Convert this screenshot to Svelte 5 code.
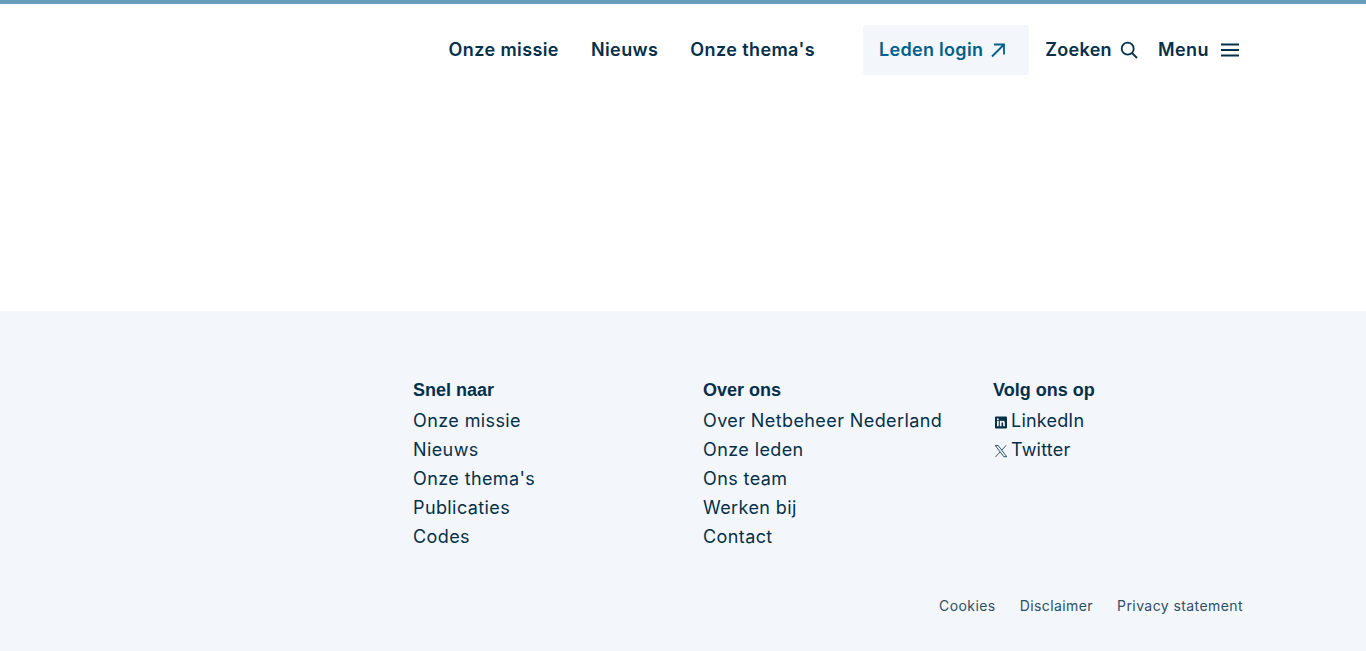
<script lang="ts">
  const mainNav = ['Onze missie', 'Nieuws', "Onze thema's"];

  const quickLinks = ['Onze missie', 'Nieuws', "Onze thema's", 'Publicaties', 'Codes'];
  const aboutLinks = ['Over Netbeheer Nederland', 'Onze leden', 'Ons team', 'Werken bij', 'Contact'];
  const legalLinks = ['Cookies', 'Disclaimer', 'Privacy statement'];
</script>

<header class="header">
  <nav class="main-nav" aria-label="Hoofdmenu">
    {#each mainNav as item}
      <a href="#top" class="nav-link">{item}</a>
    {/each}
  </nav>

  <a href="#top" class="login">
    Leden login
    <svg width="16" height="16" viewBox="0 0 16 16" fill="none" stroke="currentColor" stroke-width="1.8">
      <path d="M2 14.5 14 2.5M4 2.5h10v10" />
    </svg>
  </a>

  <button type="button" class="tool search">
    Zoeken
    <svg width="18" height="18" viewBox="0 0 18 18" fill="none" stroke="currentColor" stroke-width="1.8">
      <circle cx="7.7" cy="7.7" r="6" />
      <path d="m12 12 5 5" />
    </svg>
  </button>

  <button type="button" class="tool menu">
    Menu
    <svg width="18" height="14" viewBox="0 0 18 14" fill="none" stroke="currentColor" stroke-width="1.8">
      <path d="M0 1.5h18M0 7h18M0 12.5h18" />
    </svg>
  </button>
</header>

<main class="content"></main>

<footer class="footer">
  <div class="columns">
    <div class="column">
      <h2>Snel naar</h2>
      <ul>
        {#each quickLinks as link}
          <li><a href="#top">{link}</a></li>
        {/each}
      </ul>
    </div>

    <div class="column">
      <h2>Over ons</h2>
      <ul>
        {#each aboutLinks as link}
          <li><a href="#top">{link}</a></li>
        {/each}
      </ul>
    </div>

    <div class="column">
      <h2>Volg ons op</h2>
      <ul>
        <li>
          <a href="#top" class="social">
            <svg width="14" height="14" viewBox="0 0 14 14">
              <path
                fill-rule="evenodd"
                fill="currentColor"
                d="M2 1.5h10a1 1 0 0 1 1 1v10a1 1 0 0 1-1 1H2a1 1 0 0 1-1-1v-10a1 1 0 0 1 1-1ZM3 5.8v5.4h1.7V5.800ZM3 3.400v1.600h1.700V3.400ZM5.800 5.800v5.400h1.700V8.200c0-1.300 1.600-1.300 1.600 0v3h1.700V7.800c0-2.400-2.500-2.500-3.300-1.200v-.8Z"
              />
            </svg>
            LinkedIn
          </a>
        </li>
        <li>
          <a href="#top" class="social">
            <svg width="14" height="14" viewBox="0 0 14 14" fill="none" stroke="currentColor" stroke-width="0.8">
              <path d="M1.300 1.500h2.900l8.500 11.200H9.800ZM12.200 1.300 7.800 6.200M6.100 8 1.500 12.900" />
            </svg>
            Twitter
          </a>
        </li>
      </ul>
    </div>
  </div>

  <nav class="legal" aria-label="Juridisch">
    {#each legalLinks as link}
      <a href="#top">{link}</a>
    {/each}
  </nav>
</footer>

<style>
  :global(body) {
    background: #fff;
    color: #05304a;
    font-family: Inter, "Liberation Sans", sans-serif;
  }

  a {
    color: inherit;
    text-decoration: none;
  }

  .header {
    display: flex;
    align-items: center;
    justify-content: flex-end;
    height: 91px;
    padding: 0 127px 0 0;
    border-top: 4px solid #689dbb;
  }

  .main-nav {
    display: flex;
    gap: 32px;
    margin-right: 48px;
  }

  .nav-link,
  .tool {
    font-size: 18px;
    font-weight: 600;
    letter-spacing: 0.3px;
  }

  .nav-link {
    letter-spacing: 0.4px;
  }

  .login {
    display: flex;
    align-items: center;
    gap: 7px;
    height: 50px;
    padding: 0 23px 0 16px;
    background: #f3f6fa;
    border-radius: 3px;
    color: #00608a;
    font-size: 18px;
    font-weight: 600;
    letter-spacing: 0.3px;
  }

  .tool {
    display: flex;
    align-items: center;
    padding: 0;
    border: 0;
    background: none;
    color: inherit;
    font-family: inherit;
  }

  .search {
    gap: 8px;
    margin-left: 16px;
  }

  .menu {
    gap: 12px;
    margin-left: 20px;
    letter-spacing: 0.45px;
  }

  .content {
    height: 216px;
  }

  .footer {
    height: 340px;
    box-sizing: border-box;
    padding: 69px 123px 0 413px;
    background: #f3f6fa;
  }

  .columns {
    display: grid;
    grid-template-columns: repeat(3, 290px);
  }

  h2 {
    margin: 0 0 6.4px;
    font-family: "Liberation Sans", Arial, sans-serif;
    font-size: 18px;
    line-height: 21px;
    font-weight: 700;
  }

  ul {
    margin: 0;
    padding: 0;
    list-style: none;
    font-size: 18px;
    line-height: 28.8px;
    letter-spacing: 0.4px;
  }

  .social {
    display: flex;
    align-items: center;
    gap: 3px;
    margin-left: 1px;
    letter-spacing: 0.2px;
  }

  .legal {
    display: flex;
    justify-content: flex-end;
    gap: 24px;
    margin-top: 45.6px;
    font-size: 14px;
    letter-spacing: 0.42px;
    color: #2d5066;
  }
</style>
